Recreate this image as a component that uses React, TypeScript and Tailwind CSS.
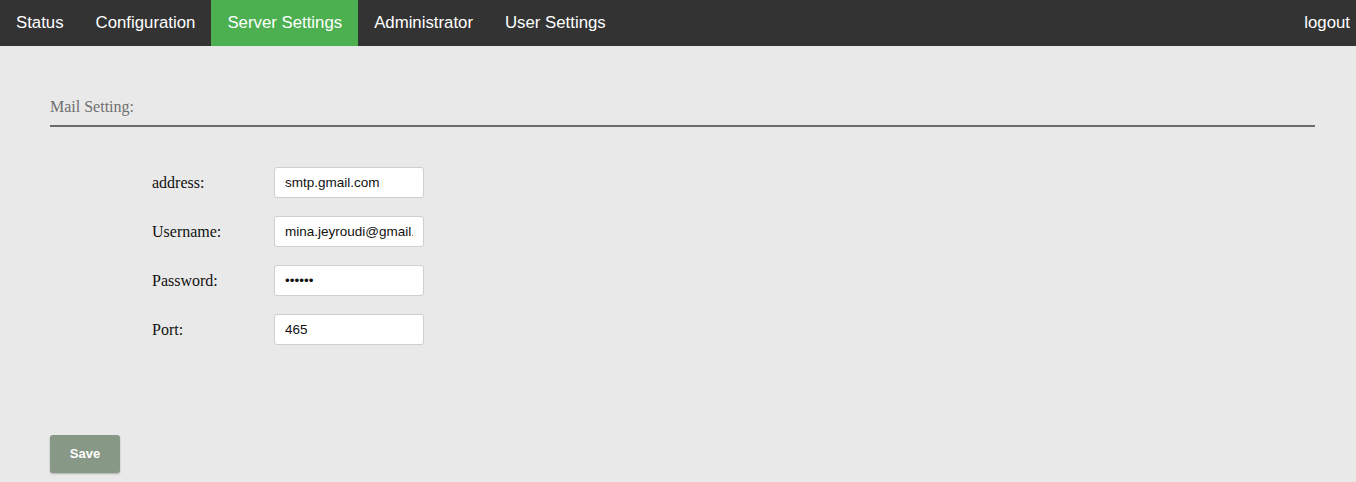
import React from "react";

const tabs = ["Status", "Configuration", "Server Settings", "Administrator", "User Settings"];

const fields = [
	{ label: "address:", value: "smtp.gmail.com", type: "text" },
	{ label: "Username:", value: "mina.jeyroudi@gmail.com", type: "text" },
	{ label: "Password:", value: "123456", type: "password" },
	{ label: "Port:", value: "465", type: "text" },
];

export default function App() {
	return (
		<div className="min-h-[482px] bg-[#e9e9e9] font-['Liberation_Sans',Arial,sans-serif]">
			<nav className="flex h-[46px] items-stretch justify-between bg-[#333333] text-[16.8px] text-white">
				<ul className="flex">
					{tabs.map((tab) => (
						<li
							key={tab}
							className={`flex items-center px-4 pb-[1px] ${tab === "Server Settings" ? "bg-[#4caf50]" : ""}`}
						>
							{tab}
						</li>
					))}
				</ul>
				<div className="flex items-center pb-[1px] pr-[6px]">logout</div>
			</nav>

			<div className="pl-[50px] pr-[41px] pt-[49px]">
				<p className="border-b-2 border-[#6b6b6b] pb-[6px] font-['Liberation_Serif',serif] text-[16px] text-[#6f6f6f]">
					Mail Setting:
				</p>

				<form className="flex flex-col gap-[18px] pl-[102px] pt-[40px]">
					{fields.map((f) => (
						<div key={f.label} className="flex items-center">
							<label className="w-[122px] font-['Liberation_Serif',serif] text-[16px] text-[#111]">
								{f.label}
							</label>
							<input
								type={f.type}
								defaultValue={f.value}
								className="h-[31px] w-[150px] rounded-[3px] border border-[#cfcfcf] bg-white px-[10px] text-[13.5px] text-[#111] outline-none"
							/>
						</div>
					))}
				</form>

				<button
					type="button"
					className="mt-[90px] h-[38px] w-[70px] rounded-[3px] bg-[#879887] text-[13px] font-bold text-white shadow-[0_1px_2px_rgba(0,0,0,0.25)]"
				>
					Save
				</button>
			</div>
		</div>
	);
}
